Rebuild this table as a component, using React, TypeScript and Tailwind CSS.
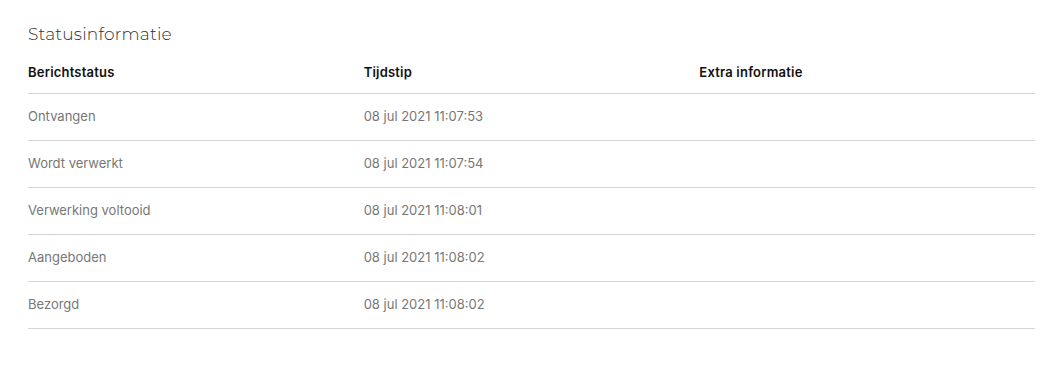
import React from "react";

const rows = [
  ["Ontvangen", "08 jul 2021 11:07:53"],
  ["Wordt verwerkt", "08 jul 2021 11:07:54"],
  ["Verwerking voltooid", "08 jul 2021 11:08:01"],
  ["Aangeboden", "08 jul 2021 11:08:02"],
  ["Bezorgd", "08 jul 2021 11:08:02"],
];

export default function App() {
  return (
    <div className="w-[1062px] h-[365px] bg-white pl-[28px] pr-[27px] pt-[22px] font-['Inter','Noto_Sans',sans-serif]">
      <h2 className="text-[17px] leading-[24px] font-light text-[#333] font-['Montserrat','Inter',sans-serif] tracking-[0.2px]">
        Statusinformatie
      </h2>
      <div className="grid grid-cols-3 mt-[5px]">
        <div className="h-[43px] pt-[2px] flex items-center text-[13px] font-semibold text-[#111] tracking-[0.2px] border-b border-[#d4d4d4]">Berichtstatus</div>
        <div className="h-[43px] pt-[2px] flex items-center text-[13px] font-semibold text-[#111] tracking-[0.2px] border-b border-[#d4d4d4]">Tijdstip</div>
        <div className="h-[43px] pt-[2px] flex items-center text-[13px] font-semibold text-[#111] tracking-[0.2px] border-b border-[#d4d4d4]">Extra informatie</div>
        {rows.map(([s, t]) => (
          <React.Fragment key={s}>
            <div className="h-[47px] flex items-center text-[13px] text-[#777] border-b border-[#d4d4d4]">{s}</div>
            <div className="h-[47px] flex items-center text-[13px] text-[#777] border-b border-[#d4d4d4]">{t}</div>
            <div className="h-[47px] border-b border-[#d4d4d4]"></div>
          </React.Fragment>
        ))}
      </div>
    </div>
  );
}
